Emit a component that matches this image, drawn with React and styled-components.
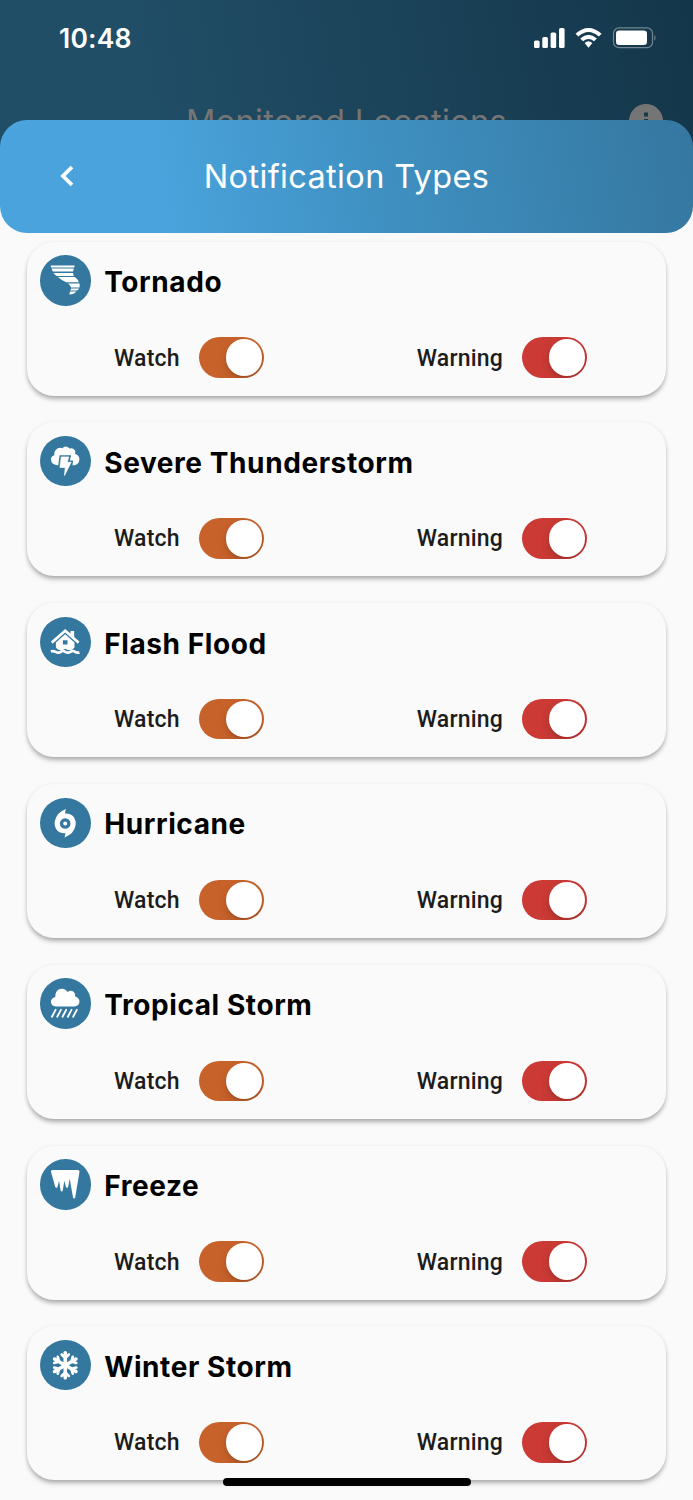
import React, { useState } from "react";
import styled, { createGlobalStyle } from "styled-components";
import { FaIcicles, FaSnowflake } from "react-icons/fa6";

const GlobalStyle = createGlobalStyle`
  * {
    box-sizing: border-box;
  }
  body {
    margin: 0;
    background: #fafafa;
    overflow: hidden;
  }
`;

const Screen = styled.main`
  width: 693px;
  height: 1500px;
  overflow: hidden;
  position: relative;
  background: #fafafa;
  font-family: Inter, "Liberation Sans", sans-serif;
`;

const Backdrop = styled.div`
  height: 176px;
  overflow: hidden;
  background: linear-gradient(80deg, #204e66 22%, #1c455c 50%, #14364a 100%);
`;

const StatusBar = styled.div`
  display: flex;
  align-items: center;
  justify-content: space-between;
  height: 76px;
  padding: 0 36px 0 59px;
  color: #fff;
`;

const Clock = styled.span`
  font-size: 26.5px;
  font-weight: 600;
  letter-spacing: 0.2px;
`;

const StatusIcons = styled.svg`
  display: block;
  width: 124px;
  height: 22px;
`;

const BackdropTitle = styled.div`
  display: grid;
  grid-template-columns: 100px 1fr 100px;
  align-items: center;
  height: 90px;
  color: #757575;
  span {
    text-align: center;
    font-size: 32.5px;
    letter-spacing: 0.33px;
  }
  svg {
    display: block;
    margin-left: 36px;
  }
`;

const Header = styled.header`
  position: relative;
  display: grid;
  grid-template-columns: 134px 1fr 134px;
  align-items: center;
  height: 112.5px;
  margin-top: -56px;
  border-radius: 27px;
  color: #fff;
  background: linear-gradient(80deg, #4aa3dc 24%, #4093c5 50%, #3577a0 100%);
`;

const BackButton = styled.button`
  display: flex;
  justify-content: center;
  padding: 0;
  border: 0;
  background: none;
  color: inherit;
`;

const Title = styled.h1`
  margin: 0;
  padding-top: 1px;
  text-align: center;
  font-size: 32.5px;
  font-weight: 400;
  letter-spacing: 0.36px;
  white-space: nowrap;
`;

const List = styled.div`
  display: flex;
  flex-direction: column;
  gap: 26.8px;
  padding: 9.2px 27px 0;
`;

const Card = styled.section`
  height: 154px;
  flex: none;
  padding-top: 13.3px;
  border-radius: 27px;
  background: #fafafa;
  box-shadow: 0 4px 5px -1px rgba(0, 0, 0, 0.28), 0 1px 4px rgba(0, 0, 0, 0.1);
`;

const CardHeading = styled.div`
  display: flex;
  align-items: center;
  gap: 13.6px;
  height: 51px;
  padding-left: 13.3px;
`;

const Badge = styled.div`
  display: flex;
  align-items: center;
  justify-content: center;
  width: 50.4px;
  height: 50.4px;
  border-radius: 50%;
  background: #35789f;
  color: #fff;
  svg {
    display: block;
  }
`;

const CardTitle = styled.h2`
  margin: 3px 0 0;
  color: #000;
  font-size: 28px;
  font-weight: 700;
  letter-spacing: 0.58px;
  white-space: nowrap;
`;

const Options = styled.div`
  display: grid;
  grid-template-columns: 302.8px 1fr;
  padding: 31.4px 0 0 87px;
`;

const Option = styled.label`
  display: flex;
  align-items: center;
`;

const Label = styled.span`
  width: ${({ $width }) => $width}px;
  padding-top: 1.2px;
  color: #1c1c1c;
  font-family: Roboto, sans-serif;
  font-size: 23px;
  font-weight: 500;
  letter-spacing: 0.2px;
`;

const Track = styled.button`
  display: flex;
  align-items: center;
  justify-content: ${({ $on }) => ($on ? "flex-end" : "flex-start")};
  width: 65.6px;
  height: 40.4px;
  padding: 0 2.2px;
  border: 0;
  border-radius: 21px;
  overflow: hidden;
  background: ${({ $on, $color }) => ($on ? $color : "#d5d5d5")};
`;

const Thumb = styled.span`
  width: 36.4px;
  height: 36.4px;
  border-radius: 50%;
  background: #fff;
  box-shadow: 0 4px 10px rgba(0, 0, 0, 0.15), 0 2px 2px rgba(0, 0, 0, 0.08);
`;

const HomeIndicator = styled.div`
  position: absolute;
  left: 222.5px;
  bottom: 14px;
  width: 248px;
  height: 8.5px;
  border-radius: 5px;
  background: #000;
`;

// shared frame for the drawings that fill a whole badge
function Glyph({ children }) {
  return (
    <svg width="50.4" height="50.4" viewBox="0 0 152 152" fill="currentColor">
      {children}
    </svg>
  );
}

function TornadoIcon() {
  return (
    <Glyph>
      <path d="M32 32H105L103 38H34Z" />
      <path d="M35 41H102L100 50H39Q36 46 35 41Z" />
      <path d="M41 54H100Q100 59 102 63H50Q44 59 41 54Z" />
      <path d="M54 66H105L113 74Q116 78 117 82H79Q65 76 54 66Z" />
      <path d="M84 86H119Q121 92 119 98H94Q91 91 84 86Z" />
      <path d="M94 101H118L113 107H92Z" />
      <path d="M90 110H110Q102 119 89 119Z" />
    </Glyph>
  );
}

function ThunderstormIcon() {
  return (
    <Glyph>
      <path d="M52 88Q34 86 33 72Q32 61 43 58Q42 43 54 37Q61 34 67 37Q78 26 89 38Q99 34 105 43Q108 48 106 54Q119 57 119 71Q118 85 104 88H98L100 74H90L94 58H59L55 88Z" />
      <path d="M64 63H87L82 79H94L74 119L76 95H60Z" strokeLinejoin="round" strokeWidth="2" stroke="currentColor" />
    </Glyph>
  );
}

function FloodIcon() {
  return (
    <Glyph>
      <path d="M33 74L76 36L92 50V42H103V60L119 74L114 81L76 47L38 81Z" />
      <path
        fillRule="evenodd"
        d="M76 52L104 77V92L98 98Q86 103 76 96Q65 103 54 98L48 92V77ZM69 70V83H83V70Z"
      />
      <path
        d="M33 104Q40 101 47 105Q55 110 63 105Q69 100 76 105Q84 110 92 105Q99 100 106 105Q112 109 119 107"
        fill="none"
        stroke="currentColor"
        strokeWidth="8"
      />
    </Glyph>
  );
}

function HurricaneIcon() {
  return (
    <Glyph>
      <path
        fillRule="evenodd"
        d="M78 33L75 47Q94 46 103 59Q110 71 107 84Q103 108 74 119L77 106Q58 107 49 94Q42 83 45 69Q50 44 78 33ZM76 61A16 16 0 1 0 76 93A16 16 0 1 0 76 61Z"
      />
      <circle cx="76" cy="77" r="6" />
    </Glyph>
  );
}

function RainIcon() {
  return (
    <Glyph>
      <path d="M48 86Q33 84 33 71Q34 60 46 57Q46 38 60 33Q74 29 83 42Q93 35 102 42Q108 48 106 56Q119 60 119 72Q118 84 105 86Z" />
      <path
        d="M47 96L36 117M63 96L52 117M79 96L68 117M95 96L84 117M111 96L100 117"
        stroke="currentColor"
        strokeWidth="5.5"
        strokeLinecap="round"
      />
    </Glyph>
  );
}

function SignalGlyphs() {
  return (
    <StatusIcons viewBox="0 0 124 22" fill="#fff">
      <rect x="1" y="13.5" width="5.6" height="7.5" rx="1.6" />
      <rect x="9.3" y="10" width="5.6" height="11" rx="1.6" />
      <rect x="17.6" y="5.5" width="5.6" height="15.5" rx="1.6" />
      <rect x="26" y="1" width="5.6" height="20" rx="1.6" />
      <path d="M42.5 6.7Q55.5-4.7 68.6 6.7L65.7 9.6Q55.5.5 45.4 9.6Z" />
      <path d="M47.2 11.4Q55.5 4 63.9 11.4L61 14.2Q55.5 9.6 50.1 14.2Z" />
      <path d="M51.6 16Q55.5 12.6 59.4 16L55.5 20.8Z" />
      <rect x="80.5" y=".9" width="39" height="19.8" rx="5.5" fill="none" stroke="#718792" strokeWidth="1.2" />
      <rect x="83" y="3.6" width="31" height="14.4" rx="3.3" />
      <path d="M121.3 7.8Q124 10.8 121.3 13.8Z" fill="#718792" />
    </StatusIcons>
  );
}

const notificationTypes = [
  { name: "Tornado", icon: <TornadoIcon /> },
  { name: "Severe Thunderstorm", icon: <ThunderstormIcon /> },
  { name: "Flash Flood", icon: <FloodIcon /> },
  { name: "Hurricane", icon: <HurricaneIcon /> },
  { name: "Tropical Storm", icon: <RainIcon /> },
  { name: "Freeze", icon: <FaIcicles size={28.5} /> },
  { name: "Winter Storm", icon: <FaSnowflake size={28.5} /> },
];

function Switch({ label, labelWidth, color }) {
  let [on, setOn] = useState(true);

  return (
    <Option>
      <Label $width={labelWidth}>{label}</Label>
      <Track type="button" role="switch" aria-checked={on} $on={on} $color={color} onClick={() => setOn(!on)}>
        <Thumb />
      </Track>
    </Option>
  );
}

function NotificationCard({ name, icon }) {
  return (
    <Card>
      <CardHeading>
        <Badge>{icon}</Badge>
        <CardTitle>{name}</CardTitle>
      </CardHeading>
      <Options>
        <Switch label="Watch" labelWidth={84.8} color="#c8622b" />
        <Switch label="Warning" labelWidth={104.8} color="#cb3a35" />
      </Options>
    </Card>
  );
}

export default function App() {
  return (
    <Screen>
      <GlobalStyle />
      <Backdrop>
        <StatusBar>
          <Clock>10:48</Clock>
          <SignalGlyphs />
        </StatusBar>
        <BackdropTitle>
          <i />
          <span>Monitored Locations</span>
          <svg width="34" height="34" viewBox="0 0 34 34">
            <circle cx="17" cy="17" r="17" fill="#757575" />
            <path d="M15 8.5h4v4h-4zM15 15h4v11h-4z" fill="#17394c" />
          </svg>
        </BackdropTitle>
      </Backdrop>
      <Header>
        <BackButton aria-label="Back">
          <svg width="14" height="22" viewBox="0 0 14 22" fill="none" stroke="currentColor" strokeWidth="3.8">
            <path d="M12 2L3 11L12 20" />
          </svg>
        </BackButton>
        <Title>Notification Types</Title>
      </Header>
      <List>
        {notificationTypes.map((type) => (
          <NotificationCard key={type.name} {...type} />
        ))}
      </List>
      <HomeIndicator />
    </Screen>
  );
}
